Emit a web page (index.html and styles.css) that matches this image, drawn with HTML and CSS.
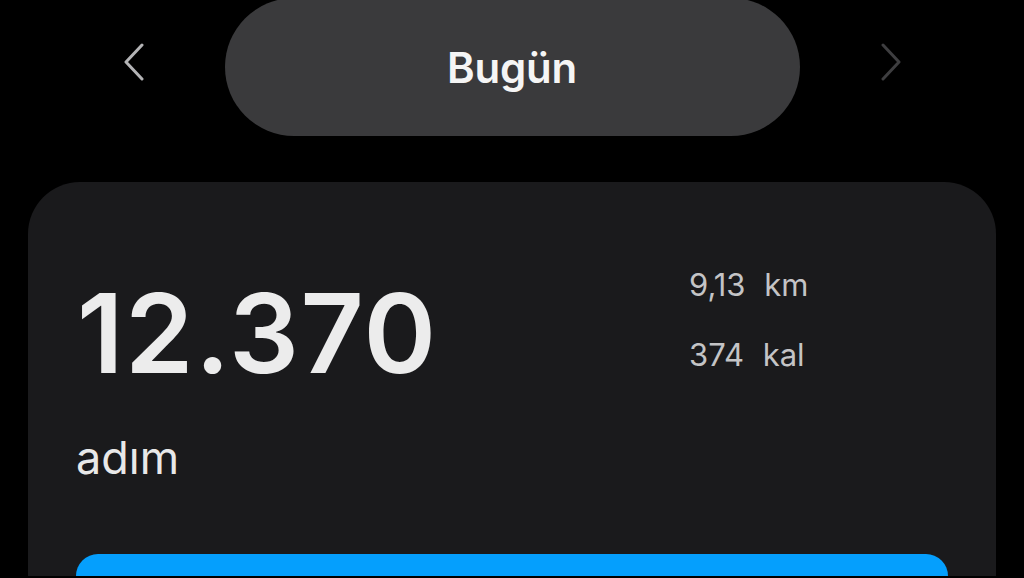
FILE: index.html
```html
<!DOCTYPE html>
<html lang="tr">

<head>
    <meta charset="UTF-8">
    <meta name="viewport" content="width=device-width, initial-scale=1.0">
    <title>Adımlar</title>
    <link rel="stylesheet" href="styles.css">
</head>

<body>
    <div class="steps-page">
        <div class="day-nav">
            <button class="nav-arrow">
                <svg width="22" height="38" viewBox="0 0 22 38">
                    <path d="M19 2 L3 19 L19 36" fill="none" stroke="currentColor" stroke-width="3" stroke-linecap="round" stroke-linejoin="round" />
                </svg>
            </button>
            <div class="day-pill">Bugün</div>
            <button class="nav-arrow nav-arrow-off">
                <svg width="22" height="38" viewBox="0 0 22 38">
                    <path d="M3 2 L19 19 L3 36" fill="none" stroke="currentColor" stroke-width="3" stroke-linecap="round" stroke-linejoin="round" />
                </svg>
            </button>
        </div>

        <div class="steps-card">
            <div class="steps-summary">
                <div class="steps-main">
                    <div class="steps-count">12.370</div>
                    <div class="steps-unit">adım</div>
                </div>
                <div class="steps-stats">
                    <div class="stat">9,13 <span>km</span></div>
                    <div class="stat">374 <span>kal</span></div>
                </div>
            </div>
            <div class="steps-bar"></div>
        </div>
    </div>
</body>

</html>
```

FILE: styles.css
```css
body {
    font-family: Inter, "Noto Sans", sans-serif;
    margin: 0;
    padding: 0;
    background-color: #000;
    color: #eee;
    overflow: hidden;
}

.steps-page {
    width: 1024px;
    height: 578px;
}

.day-nav {
    display: flex;
    justify-content: center;
    align-items: center;
    gap: 80px;
    margin-top: -2px;
}

.nav-arrow {
    background: none;
    border: none;
    padding: 0;
    width: 22px;
    height: 38px;
    margin-top: -10px;
    color: #b4b4b6;
    cursor: pointer;
}

.nav-arrow-off {
    color: #3e3e40;
}

.day-pill {
    width: 575px;
    height: 138px;
    border-radius: 69px;
    background-color: #3a3a3c;
    display: flex;
    justify-content: center;
    align-items: center;
    font-size: 42px;
    font-weight: 600;
    color: #f5f5f5;
    letter-spacing: -0.2px;
}

.steps-card {
    margin: 46px 28px 0;
    height: 600px;
    background-color: #1a1a1c;
    border-radius: 52px;
    padding: 0 48px;
}

.steps-summary {
    display: grid;
    grid-template-columns: 613px auto;
    padding-top: 96px;
    height: 276px;
}

.steps-count {
    font-size: 110px;
    font-weight: 600;
    line-height: 1;
    letter-spacing: 1.5px;
    color: #ececec;
    margin-left: 1px;
}

.steps-unit {
    font-size: 45px;
    margin-top: 42px;
    color: #e8e8e8;
}

.steps-stats {
    display: flex;
    flex-direction: column;
    gap: 36px;
    margin-top: -10px;
}

.stat {
    font-size: 31px;
    line-height: 34px;
    color: #c4c4c6;
}

.stat span {
    margin-left: 10px;
}

.steps-bar {
    height: 80px;
    border-radius: 22px;
    background-color: #059ffd;
}
```
